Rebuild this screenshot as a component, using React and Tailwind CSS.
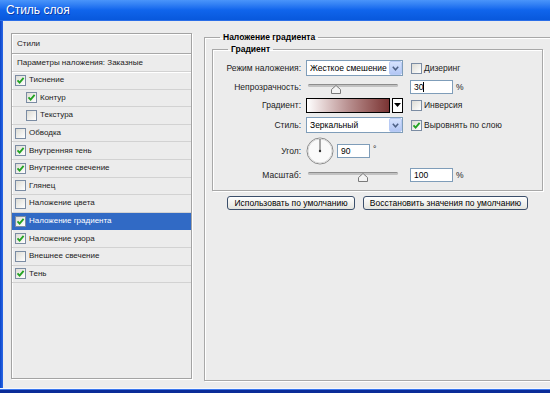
import React from 'react'

const layers = [
  { name: 'Тиснение', on: true },
  { name: 'Контур', on: true, sub: true },
  { name: 'Текстура', on: false, sub: true },
  { name: 'Обводка', on: false },
  { name: 'Внутренняя тень', on: true },
  { name: 'Внутреннее свечение', on: true },
  { name: 'Глянец', on: false },
  { name: 'Наложение цвета', on: false },
  { name: 'Наложение градиента', on: true, active: true },
  { name: 'Наложение узора', on: true },
  { name: 'Внешнее свечение', on: false },
  { name: 'Тень', on: true },
]

function Check({ on }) {
  return (
    <span className="w-[11px] h-[11px] shrink-0 border border-[#7b8ca3] bg-gradient-to-br from-[#dddcd5] to-white flex items-center justify-center">
      {on && (
        <svg width="9" height="9" viewBox="0 0 9 9">
          <path d="M1.5 4.3 L3.6 6.6 L7.6 1.8" stroke="#22a322" strokeWidth="1.8" fill="none" />
        </svg>
      )}
    </span>
  )
}

function Select({ value }) {
  return (
    <div className="w-[97px] h-[16px] border border-[#7f9db9] bg-white flex items-center">
      <span className="flex-1 pl-[3px] text-black truncate">{value}</span>
      <span className="w-[13px] h-[14px] border border-[#b8cbf5] rounded-[2px] bg-gradient-to-b from-[#d6e3fd] to-[#b2c6f4] flex items-center justify-center">
        <svg width="7" height="5" viewBox="0 0 7 5">
          <path d="M0.8 0.8 L3.5 3.8 L6.2 0.8" stroke="#4d6185" strokeWidth="1.5" fill="none" />
        </svg>
      </span>
    </div>
  )
}

function Slider({ pos }) {
  return (
    <div className="relative w-[97px] h-[16px]">
      <div className="absolute left-[2px] top-[5px] w-[90px] h-[3px] rounded-full bg-[#c2c2c2] border-t border-[#8d8d8d]" />
      <svg className="absolute top-[6px]" style={{ left: pos - 5 }} width="10" height="9" viewBox="0 0 10 9">
        <path d="M5 0.5 L9.5 4.5 L9.5 8.5 L0.5 8.5 L0.5 4.5 Z" fill="#f4f4f4" stroke="#7a7a7a" />
      </svg>
    </div>
  )
}

function Field({ value, cursor, w = 'w-[43px]' }) {
  return (
    <div className={`${w} h-[14px] border border-[#7f9db9] bg-white flex items-center pl-[3px] text-black`}>
      {value}
      {cursor && <span className="w-px h-[10px] bg-black" />}
    </div>
  )
}

function Label({ children }) {
  return <span className="w-[89px] shrink-0 text-right pr-px">{children}</span>
}

export default function App() {
  return (
    <div className="w-[550px] h-[393px] overflow-hidden flex flex-col bg-[#ececec] font-['Liberation_Sans',Arial,sans-serif] text-[8.5px] text-[#222]">
      {/* title bar */}
      <div className="h-[21px] shrink-0 bg-gradient-to-b from-[#4a95fa] via-[#1065ec] to-[#0858dc] flex items-center pl-[6px] border-b border-[#2a6ee8]">
        <span className="text-white text-[12px] [text-shadow:1px_1px_0_#0a3aa8]">Стиль слоя</span>
      </div>

      <div className="flex-1 flex min-h-0">
        <div className="w-[3px] shrink-0 bg-gradient-to-r from-[#0a44c8] to-[#2a68e6]" />
        <div className="flex-1 flex gap-[12px] pl-[8px] pt-[12px]">
          {/* left list */}
          <div className="w-[181px] h-[346px] shrink-0 border border-[#a3a3a3] shadow-[1px_1px_0_#fff,inset_1px_1px_0_#fff] flex flex-col text-[8px]">
            <div className="h-[20px] flex items-center pl-[5px] border-b border-[#a8a8a8] shadow-[0_1px_0_#fff]">Стили</div>
            <div className="h-[18px] flex items-center pl-[5px] border-b border-[#d2d2d2] shadow-[0_1px_0_#fff]">
              Параметры наложения: Заказные
            </div>
            {layers.map((l) => (
              <div
                key={l.name}
                className={`h-[17.6px] shrink-0 flex items-center gap-[3px] border-b ${
                  l.active ? 'bg-[#316ac5] text-white border-[#316ac5]' : 'border-[#d2d2d2]'
                } ${l.sub ? 'pl-[14px]' : 'pl-[3px]'}`}
              >
                <Check on={l.on} />
                <span>{l.name}</span>
              </div>
            ))}
          </div>

          {/* right group */}
          <fieldset className="w-[360px] h-[350px] shrink-0 -mt-[2px] border border-[#a8a8a8] shadow-[1px_1px_0_#fff,inset_1px_1px_0_#fff] pl-[7px]">
            <legend className="ml-[8px] px-[3px] leading-[12px] font-bold text-black">Наложение градиента</legend>

            <fieldset className="w-[331px] h-[148px] border border-[#a8a8a8] shadow-[1px_1px_0_#fff,inset_1px_1px_0_#fff]">
              <legend className="ml-[15px] px-[3px] leading-[12px] font-bold text-black">Градиент</legend>

              <div className="mt-[5px] h-[16px] flex items-center">
                <Label>Режим наложения:</Label>
                <div className="ml-[4px]"><Select value="Жесткое смешение" /></div>
                <div className="ml-[8px]"><Check on={false} /></div>
                <span className="ml-[2px]">Дизеринг</span>
              </div>

              <div className="mt-[3px] h-[16px] flex items-center">
                <Label>Непрозрачность:</Label>
                <div className="ml-[4px]"><Slider pos={30} /></div>
                <div className="ml-[7px]"><Field value="30" cursor /></div>
                <span className="ml-[3px]">%</span>
              </div>

              <div className="mt-[2px] h-[16px] flex items-center">
                <Label>Градиент:</Label>
                <div className="ml-[4px] w-[84px] h-[15px] border border-black bg-gradient-to-r from-white via-[#b99191] to-[#7a3434]" />
                <div className="ml-[2px] w-[11px] h-[15px] border border-black bg-white flex items-center justify-center">
                  <svg width="7" height="4" viewBox="0 0 7 4"><path d="M0 0 H7 L3.5 4 Z" fill="#000" /></svg>
                </div>
                <div className="ml-[8px]"><Check on={false} /></div>
                <span className="ml-[2px]">Инверсия</span>
              </div>

              <div className="mt-[4px] h-[16px] flex items-center">
                <Label>Стиль:</Label>
                <div className="ml-[4px]"><Select value="Зеркальный" /></div>
                <div className="ml-[8px]"><Check on /></div>
                <span className="ml-[2px]">Выровнять по слою</span>
              </div>

              <div className="mt-[4px] h-[28px] flex items-center">
                <Label>Угол:</Label>
                <svg className="ml-[4px]" width="28" height="28" viewBox="0 0 28 28">
                  <circle cx="14" cy="14" r="13" fill="#fafafa" stroke="#8a8a8a" />
                  <circle cx="14" cy="14" r="12" fill="none" stroke="#d8d8d8" />
                  <line x1="14" y1="14" x2="14" y2="2" stroke="#555" strokeWidth="1" />
                  <circle cx="14" cy="14" r="1.2" fill="#333" />
                </svg>
                <div className="ml-[3px]"><Field value="90" w="w-[33px]" /></div>
                <span className="ml-[3px] -mt-[4px]">°</span>
              </div>

              <div className="mt-[2px] h-[16px] flex items-center">
                <Label>Масштаб:</Label>
                <div className="ml-[4px]"><Slider pos={57} /></div>
                <div className="ml-[7px]"><Field value="100" /></div>
                <span className="ml-[3px]">%</span>
              </div>
            </fieldset>

            <div className="mt-[5px] ml-[15px] flex gap-[8px]">
              <button className="w-[128px] h-[14px] border border-[#3b4f6b] rounded-[3px] bg-gradient-to-b from-white to-[#e4e4de] text-black leading-none">
                Использовать по умолчанию
              </button>
              <button className="w-[165px] h-[14px] border border-[#3b4f6b] rounded-[3px] bg-gradient-to-b from-white to-[#e4e4de] text-black leading-none">
                Восстановить значения по умолчанию
              </button>
            </div>
          </fieldset>
        </div>
      </div>

      {/* bottom frame */}
      <div className="h-[5px] shrink-0 flex flex-col">
        <div className="h-px bg-[#f6f8fc]" />
        <div className="h-px bg-[#3c78ee]" />
        <div className="flex-1 bg-[#0b2c98]" />
      </div>
    </div>
  )
}
